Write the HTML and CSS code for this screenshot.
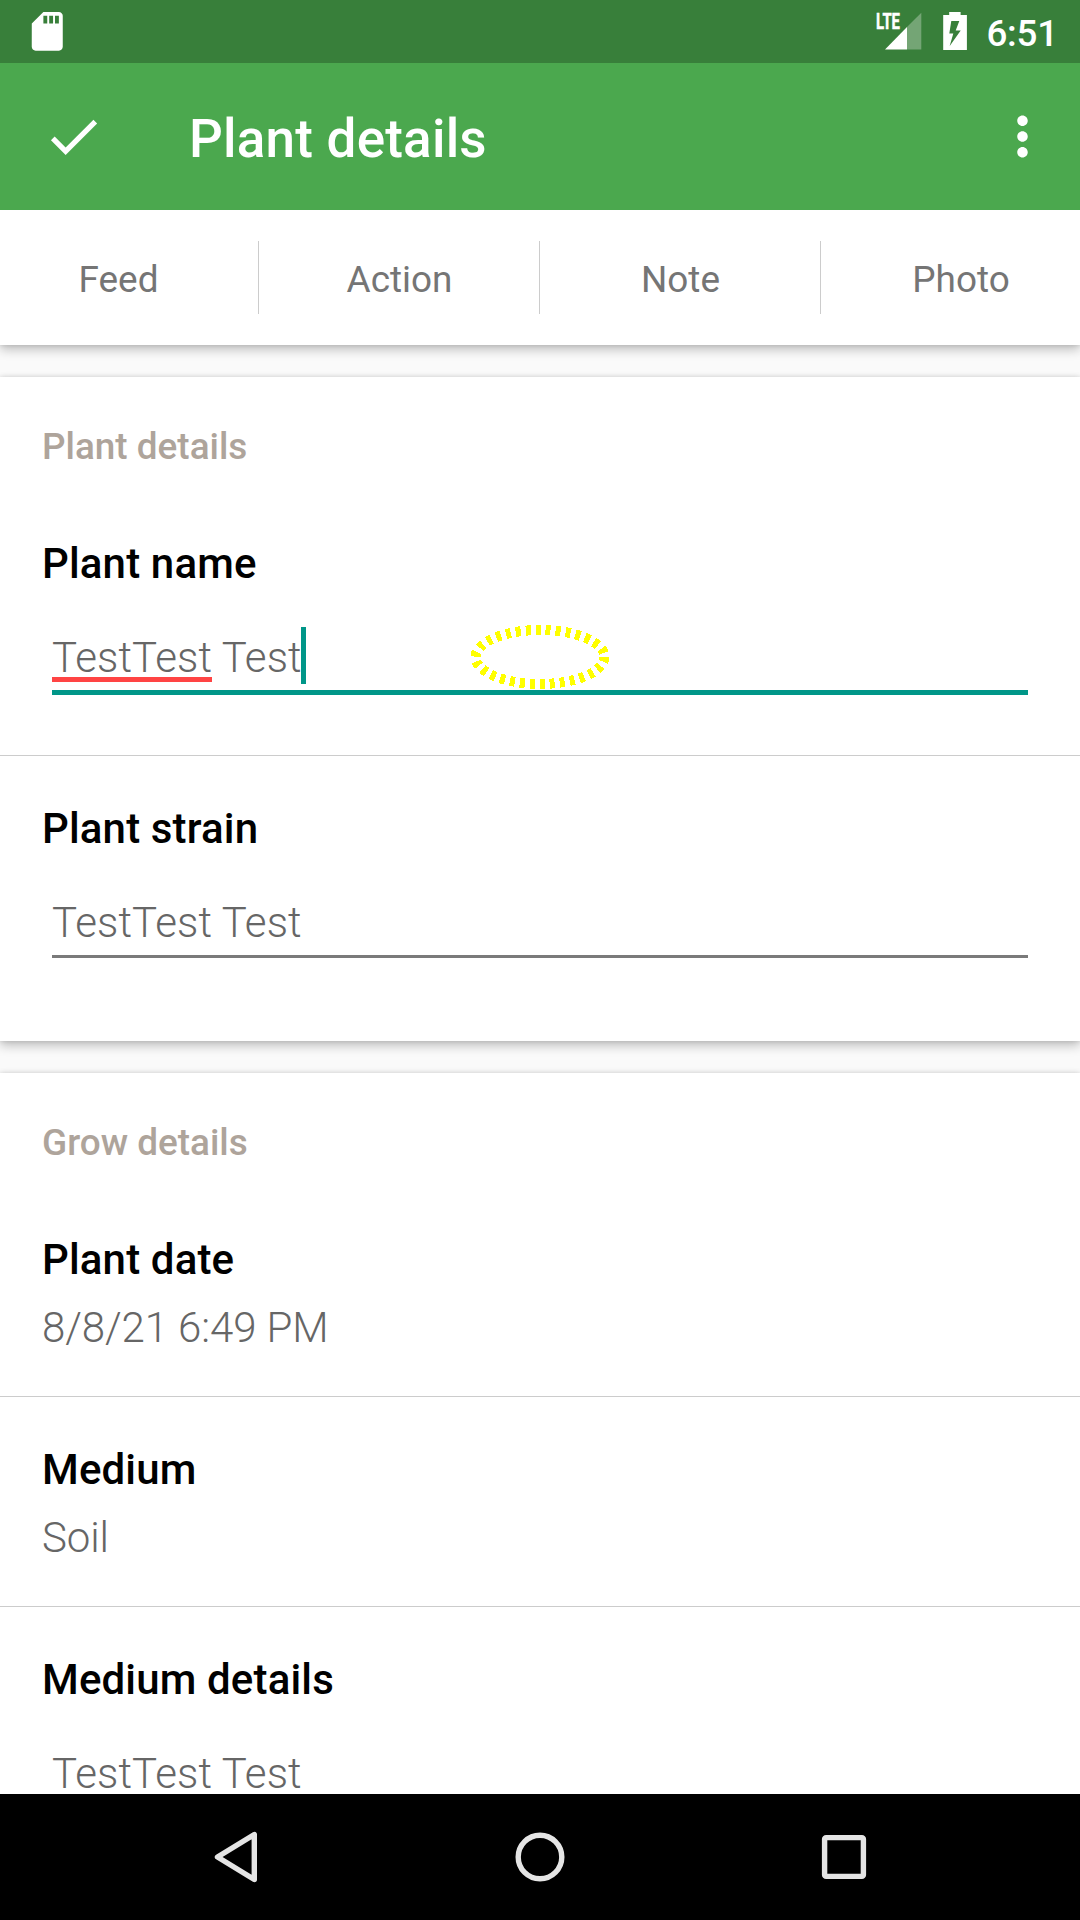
FILE: index.html
```html
<!DOCTYPE html>
<html lang="en">
<head>
<meta charset="utf-8">
<title>Plant details</title>
<link rel="stylesheet" href="styles.css">
</head>
<body>
<div class="screen">
  <div class="status-bar">
    <svg class="sd-icon" viewBox="0 0 24 24"><path d="M18 2h-8L4.02 8 4 20c0 1.1.9 2 2 2h12c1.1 0 2-.9 2-2V4c0-1.1-.9-2-2-2zm-6 6h-2V4h2v4zm3 0h-2V4h2v4zm3 0h-2V4h2v4z"/></svg>
    <div class="status-right">
      <svg class="signal" viewBox="0 0 46 63">
        <path class="signal-empty" d="M45.3 12.7V49.4H31V27z"/>
        <path d="M9 49.4L31 27v22.4z"/>
        <text class="lte" x="0" y="29" textLength="24" lengthAdjust="spacingAndGlyphs">LTE</text>
      </svg>
      <svg class="battery" viewBox="0 0 24 63"><path fill-rule="evenodd" d="M6.2 12h11.4v3H23.9v35H.2V15h6zM8.3 21l-2 12.6h4L6.7 46 17.7 30.6h-5L16.3 21z"/></svg>
      <span class="clock">6:51</span>
    </div>
  </div>
  <header class="toolbar">
    <svg class="icon" viewBox="0 0 24 24"><path d="M9 16.17L4.83 12l-1.42 1.41L9 19 21 7l-1.41-1.41z"/></svg>
    <h1 class="title">Plant details</h1>
    <svg class="icon" viewBox="0 0 24 24"><path d="M12 8c1.1 0 2-.9 2-2s-.9-2-2-2-2 .9-2 2 .9 2 2 2zm0 2c-1.1 0-2 .9-2 2s.9 2 2 2 2-.9 2-2-.9-2-2-2zm0 6c-1.1 0-2 .9-2 2s.9 2 2 2 2-.9 2-2-.9-2-2-2z"/></svg>
  </header>
  <main class="content">
    <nav class="actions">
      <span class="action">Feed</span>
      <span class="action">Action</span>
      <span class="action">Note</span>
      <span class="action">Photo</span>
    </nav>
    <section class="card card-plant">
      <h2 class="section-title">Plant details</h2>
      <div class="row">
        <div class="label">Plant name</div>
        <div class="input focused">
          <span class="misspelled">TestTest</span> Test<span class="caret"></span>
          <svg class="touch-ring" viewBox="0 0 140 66"><ellipse cx="70" cy="33" rx="64.5" ry="27"/></svg>
        </div>
      </div>
      <div class="row">
        <div class="label">Plant strain</div>
        <div class="input">TestTest Test</div>
      </div>
    </section>
    <section class="card card-grow">
      <h2 class="section-title">Grow details</h2>
      <div class="row">
        <div class="label">Plant date</div>
        <div class="value">8/8/21 6:49 PM</div>
      </div>
      <div class="row">
        <div class="label">Medium</div>
        <div class="value">Soil</div>
      </div>
      <div class="row">
        <div class="label">Medium details</div>
        <div class="input">TestTest Test</div>
      </div>
    </section>
  </main>
  <footer class="nav-bar">
    <svg class="nav-icon" viewBox="0 0 60 60"><path d="M11.5 30L48.3 7.5v45z"/></svg>
    <svg class="nav-icon" viewBox="0 0 60 60"><circle cx="30" cy="30" r="21.8"/></svg>
    <svg class="nav-icon" viewBox="0 0 60 60"><rect x="10.6" y="10.6" width="38.8" height="38.8" rx="1.5"/></svg>
  </footer>
</div>
</body>
</html>
```
FILE: styles.css
```css
* {
  box-sizing: border-box;
}

body {
  margin: 0;
  font-family: Roboto, "Liberation Sans", sans-serif;
}

svg {
  display: block;
  flex: none;
}

.screen {
  display: flex;
  flex-direction: column;
  width: 1080px;
  height: 1920px;
  overflow: hidden;
  background: #fafafa;
}

.status-bar {
  display: flex;
  flex: none;
  justify-content: space-between;
  height: 63px;
  padding: 0 22px 0 24px;
  background: #387f3a;
  color: #fff;
  fill: #fff;
}

.sd-icon {
  width: 46.5px;
  height: 46.5px;
  margin-top: 8px;
}

.status-right {
  display: flex;
}

.signal {
  width: 46px;
  height: 63px;
}

.signal-empty {
  fill-opacity: 0.3;
}

.lte {
  font-size: 22px;
  font-weight: 700;
  stroke: #fff;
  stroke-width: 0.5;
}

.battery {
  width: 24px;
  height: 63px;
  margin: 0 19px 0 21px;
}

.clock {
  padding-top: 12px;
  font-size: 36.75px;
  font-weight: 500;
  line-height: 44px;
  letter-spacing: -0.2px;
}

.toolbar {
  display: flex;
  flex: none;
  align-items: center;
  height: 147px;
  padding: 0 26px 0 42px;
  background: #4ba84e;
  color: #fff;
  fill: #fff;
}

.icon {
  width: 63px;
  height: 63px;
}

.title {
  flex: 1;
  margin: 5px 0 0 84px;
  font-size: 53px;
  font-weight: 500;
  line-height: 62px;
  letter-spacing: 0.22px;
}

.content {
  flex: 1;
  min-height: 0;
  overflow: hidden;
}

.actions,
.card {
  background: #fff;
  box-shadow: 0 5px 10px rgba(0, 0, 0, 0.22), 0 0 5px rgba(0, 0, 0, 0.14);
}

.actions {
  display: flex;
  align-items: center;
  height: 135px;
}

.action {
  flex: none;
  width: 281px;
  height: 73px;
  padding-left: 1px;
  border-right: 1px solid #ccc;
  color: #757575;
  font-size: 36.9px;
  line-height: 77px;
  text-align: center;
}

.action:first-child {
  margin-left: -22px;
}

.action:last-child {
  width: 279px;
  border-right: 0;
}

.card {
  margin-top: 32px;
  padding-top: 48px;
}

.card-plant {
  height: 664px;
}

.section-title {
  margin: 0 0 22px;
  padding-left: 42px;
  color: #aea49b;
  font-size: 36.9px;
  font-weight: 500;
  line-height: 44px;
}

.row {
  padding: 48px 42px 43px;
  border-bottom: 1px solid #ccc;
  font-size: 42px;
  line-height: 50px;
}

.row:last-child {
  border-bottom: 0;
}

.label {
  color: #000;
  font-weight: 500;
  letter-spacing: 0.15px;
}

.value {
  margin-top: 18px;
  color: #666;
  font-weight: 300;
  letter-spacing: -0.1px;
}

.input {
  position: relative;
  height: 60px;
  margin: 44px 10px 0;
  border-bottom: 3px solid #7a7a7a;
  color: #666;
  font-weight: 300;
  letter-spacing: 0.12px;
}

.focused {
  height: 62px;
  margin-bottom: 17px;
  border-bottom: 5px solid #009688;
}

.misspelled {
  display: inline-block;
  height: 49px;
  border-bottom: 5px solid #ff4444;
}

.caret {
  position: absolute;
  top: -6px;
  left: 249px;
  width: 5px;
  height: 57px;
  background: #009688;
}

.touch-ring {
  position: absolute;
  top: -9px;
  left: 418px;
  width: 140px;
  height: 66px;
  fill: none;
  stroke: #ff0;
  stroke-width: 10;
  stroke-dasharray: 5 5;
  shape-rendering: crispEdges;
}

.nav-bar {
  display: flex;
  flex: none;
  justify-content: center;
  align-items: center;
  gap: 244px;
  height: 126px;
  background: #000;
}

.nav-icon {
  width: 60px;
  height: 60px;
  fill: none;
  stroke: #e5e5e5;
  stroke-width: 5.4;
  stroke-linejoin: round;
}
```
